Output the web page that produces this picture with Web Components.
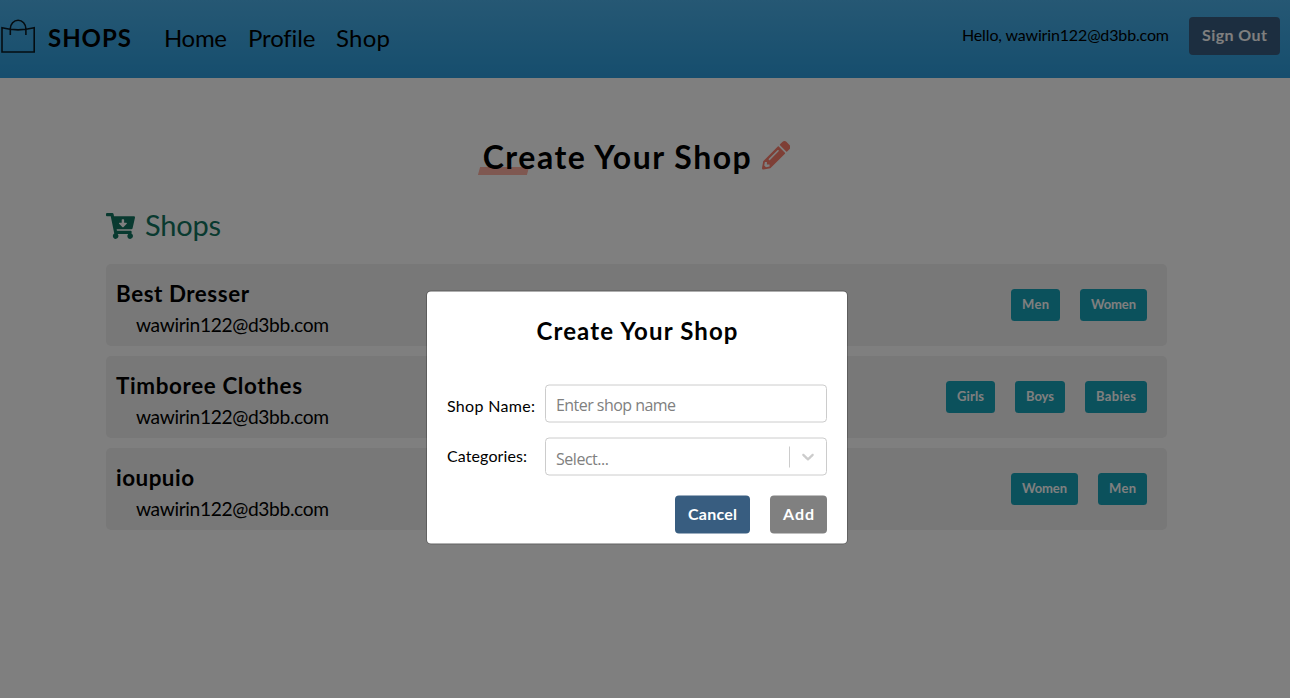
<!DOCTYPE html>
<html lang="en">
<head>
<meta charset="utf-8">
<title>Shops</title>
<style>
html,body{margin:0;height:100%;overflow:hidden;background:#fff}
body{font-family:Lato,"Open Sans",sans-serif;color:#000}
</style>
</head>
<body>
<shops-app></shops-app>
<script>
const define = (name, html, after) => customElements.define(name, class extends HTMLElement {
  connectedCallback() {
    if (this.shadowRoot) return;
    const t = document.createElement('template');
    t.innerHTML = html;
    this.attachShadow({mode: 'open'}).appendChild(t.content.cloneNode(true));
    if (after) after(this, this.shadowRoot);
  }
});

/* One line of text tracked out so that it fills the width w */
define('fit-text', `<style>
:host{display:block;flex:none;white-space:nowrap}
span{display:inline-block;white-space:nowrap}
</style><span><slot></slot></span>`, (el, root) => {
  const w = +el.getAttribute('w'), s = root.querySelector('span');
  el.style.width = w + 'px';
  const n = el.textContent.length;
  const natural = s.getBoundingClientRect().width;
  s.style.letterSpacing = ((w - natural) / (n - 1)).toFixed(3) + 'px';
});

define('shop-button', `<style>
:host{display:block;flex:none;box-sizing:border-box;height:38px;padding:8px 13px 0;border-radius:4px;background:var(--bg,#385d80);color:#fff;font:700 16px/20px Lato,sans-serif}
</style><slot></slot>`);

define('category-badge', `<style>
:host{display:block;flex:none;box-sizing:border-box;height:32px;padding:7px 11px 0;border-radius:3.5px;background:#17a2b8;color:#fff;font:700 13px/16px Lato,sans-serif}
</style><slot></slot>`);

define('bag-icon', `<style>:host{display:block;flex:none;width:36px;height:36px}svg{display:block}</style>
<svg width="36" height="36" viewBox="0 0 36 36" fill="none" stroke="#000" stroke-opacity=".85" stroke-width="1.6">
<path d="M2 9.8Q18 14 34.2 9.8V34H2ZM10.3 17V10.8a7.8 8.6 0 0 1 15.6 0V17"/></svg>`);

define('top-bar', `<style>
:host{display:flex;align-items:flex-start;box-sizing:border-box;height:78px;padding-right:10px;background:linear-gradient(#4cb0e8,#2c9cdc)}
bag-icon{margin-top:18px}
.brand{margin:23px 0 0 12px;font:700 24px/30px Lato,sans-serif}
nav{display:flex;gap:21px;margin:23px 0 0 33px;font:400 24px/30px Lato,sans-serif}
.hello{margin:25px 20px 0 auto;font:400 16px/20px Lato,sans-serif}
shop-button{margin-top:17px}
</style>
<bag-icon></bag-icon>
<fit-text class="brand" w="83">SHOPS</fit-text>
<nav><fit-text w="63">Home</fit-text><fit-text w="67">Profile</fit-text><fit-text w="54">Shop</fit-text></nav>
<fit-text class="hello" w="207">Hello, wawirin122@d3bb.com</fit-text>
<shop-button><fit-text w="65">Sign Out</fit-text></shop-button>`);

define('page-title', `<style>
:host{display:flex;justify-content:center;align-items:flex-start;gap:11px;margin:59px 17px 0 0;height:40px;font:700 32px/40px Lato,sans-serif}
.t{position:relative}
.t::before{content:"";position:absolute;left:-4px;top:30px;width:49px;height:8px;background:#ffb0a3;transform:skewX(-15deg)}
fit-text{position:relative}
svg{display:block;margin-top:4px}
</style>
<div class="t"><fit-text w="268">Create Your Shop</fit-text></div>
<svg width="28.5" height="28.5" viewBox="0 0 512 512" fill="#fc7e6c"><path d="M497.9 142.1l-46.1 46.1c-4.7 4.7-12.3 4.7-17 0l-111-111c-4.7-4.7-4.7-12.3 0-17l46.1-46.1c18.7-18.7 49.1-18.7 67.9 0l60.1 60.1c18.8 18.7 18.8 49.1 0 67.9zM284.2 99.8L21.6 362.4.4 483.9c-2.9 16.4 11.4 30.6 27.8 27.8l121.5-21.3 262.6-262.6c4.7-4.7 4.7-12.3 0-17l-111-111c-4.8-4.7-12.4-4.7-17.1 0zM124.1 339.9c-5.5-5.5-5.5-14.3 0-19.8l154-154c5.5-5.5 14.3-5.5 19.8 0s5.5 14.3 0 19.8l-154 154c-5.5 5.5-14.3 5.5-19.8 0zM88 424h48v36.3l-64.5 11.3-31.1-31.1L51.7 376H88v48z"/></svg>`);

define('list-heading', `<style>
:host{display:flex;align-items:flex-start;gap:10px;height:57px;margin-top:30px;color:#127560;font:400 29px/36px Lato,sans-serif}
svg{display:block;margin-top:6px}
</style>
<svg width="29" height="26" viewBox="0 0 576 512" fill="currentColor"><path d="M504.717 320H211.572l6.545 32h268.418c15.401 0 26.816 14.301 23.403 29.319l-5.517 24.276C523.112 414.668 536 433.828 536 456c0 31.202-25.519 56.444-56.824 55.994-29.823-.429-54.35-24.631-55.155-54.447-.44-16.287 6.085-31.049 16.803-41.548H231.176C241.553 426.165 248 440.326 248 456c0 31.813-26.528 57.431-58.67 55.938-28.54-1.325-51.751-24.385-53.251-52.917-1.158-22.034 10.436-41.455 28.051-51.586L93.883 64H24C10.745 64 0 53.255 0 40V24C0 10.745 10.745 0 24 0h102.529c11.401 0 21.228 8.021 23.513 19.19L159.208 64H551.99c15.401 0 26.816 14.301 23.403 29.319l-47.273 208C525.637 312.246 515.923 320 504.717 320zM403.029 192H360v-60c0-6.627-5.373-12-12-12h-24c-6.627 0-12 5.373-12 12v60h-43.029c-10.691 0-16.045 12.926-8.485 20.485l67.029 67.029c4.686 4.686 12.284 4.686 16.971 0l67.029-67.029c7.559-7.559 2.205-20.485-8.486-20.485z"/></svg>
<fit-text w="76">Shops</fit-text>`);

define('shop-card', `<style>
:host{display:flex;justify-content:space-between;align-items:center;box-sizing:border-box;height:82px;margin-bottom:10px;padding:0 20px 0 10px;border-radius:5px;background:#f0f0f0}
.who{align-self:flex-start;padding-top:16px}
.name{font:700 22.4px/28px Lato,sans-serif}
.mail{margin:5px 0 0 20px;font:400 19.2px/24px Lato,sans-serif}
.tags{display:flex;gap:20px}
</style>
<div class="who"><div class="name"><slot name="name"></slot></div><fit-text class="mail" w="193">wawirin122@d3bb.com</fit-text></div>
<div class="tags"><slot></slot></div>`);

define('text-field', `<style>
:host{display:flex;align-items:flex-start;height:38px}
.label{width:98px;padding-top:var(--label-top,11px);font:400 16px/20px Lato,sans-serif}
.box{flex:1;display:flex;box-sizing:border-box;height:38px;padding-left:10px;border:1px solid #ccc;border-radius:4px;color:#808080;font:400 16px/22px "Open Sans","Noto Sans",sans-serif}
.ph{padding-top:var(--ph-top,8px)}
</style>
<div class="label"><slot name="label"></slot></div>
<div class="box"><div class="ph"><slot></slot></div><slot name="end"></slot></div>`);

define('select-arrow', `<style>
:host{display:flex;align-items:flex-start;width:37px;margin-left:auto}
i{width:1px;height:21px;margin-top:8px;background:#ccc}
svg{display:block;margin:8px 0 0 8px}
</style><i></i><svg width="20" height="20" viewBox="0 0 20 20" fill="#ccc"><path d="M4.516 7.548c0.436-0.446 1.043-0.481 1.576 0l3.908 3.747 3.908-3.747c0.533-0.481 1.141-0.446 1.574 0 0.436 0.445 0.408 1.197 0 1.615-0.406 0.418-4.695 4.502-4.695 4.502-0.217 0.223-0.502 0.335-0.787 0.335s-0.57-0.112-0.789-0.335c0 0-4.287-4.084-4.695-4.502s-0.436-1.17 0-1.615z"/></svg>`);

define('create-dialog', `<style>
:host{display:block;box-sizing:border-box;width:420px;height:252px;padding:0 20px;border-radius:4px;background:#fff;box-shadow:0 0 0 1px rgba(0,0,0,.22);transform:translateY(-.5px)}
.title{display:flex;justify-content:center;box-sizing:border-box;height:93px;padding-top:24px;font:700 24px/30px Lato,sans-serif}
.second{margin-top:15px;--label-top:8px;--ph-top:9px}
.actions{display:flex;justify-content:flex-end;gap:20px;margin-top:20px}
.add{--bg:#808080}
</style>
<div class="title"><fit-text w="201">Create Your Shop</fit-text></div>
<text-field><fit-text slot="label" w="88">Shop Name:</fit-text><fit-text w="120">Enter shop name</fit-text></text-field>
<text-field class="second"><fit-text slot="label" w="80">Categories:</fit-text><fit-text w="53">Select...</fit-text><select-arrow slot="end"></select-arrow></text-field>
<div class="actions"><shop-button><fit-text w="49">Cancel</fit-text></shop-button><shop-button class="add"><fit-text w="31">Add</fit-text></shop-button></div>`);

define('modal-overlay', `<style>
:host{position:absolute;inset:0;display:flex;justify-content:center;padding:292px 16px 0 0;background:rgba(0,0,0,.5)}
</style><slot></slot>`);

define('shops-app', `<style>
:host{display:block;position:relative;height:100vh}
main{width:1061px;margin-left:106px}
</style>
<top-bar></top-bar>
<page-title></page-title>
<main>
<list-heading></list-heading>
<shop-card><fit-text slot="name" w="133">Best Dresser</fit-text>
<category-badge><fit-text w="27">Men</fit-text></category-badge><category-badge><fit-text w="45">Women</fit-text></category-badge></shop-card>
<shop-card><fit-text slot="name" w="186">Timboree Clothes</fit-text>
<category-badge><fit-text w="27">Girls</fit-text></category-badge><category-badge><fit-text w="28">Boys</fit-text></category-badge><category-badge><fit-text w="40">Babies</fit-text></category-badge></shop-card>
<shop-card><fit-text slot="name" w="78">ioupuio</fit-text>
<category-badge><fit-text w="45">Women</fit-text></category-badge><category-badge><fit-text w="27">Men</fit-text></category-badge></shop-card>
</main>
<modal-overlay><create-dialog></create-dialog></modal-overlay>`);
</script>
</body>
</html>
